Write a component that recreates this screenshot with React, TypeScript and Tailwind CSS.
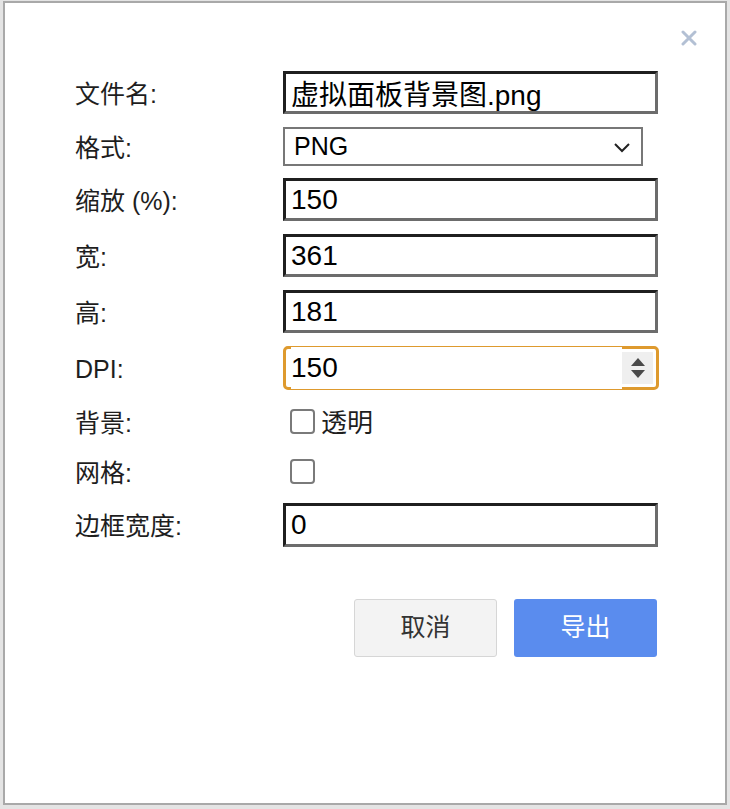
import React from 'react';

const font = { fontFamily: '"Liberation Sans", "Noto Sans CJK SC", sans-serif' };

const fieldCls =
  'w-[375px] h-[43px] border-[3px] border-t-[#1f1f1f] border-l-[#1f1f1f] border-b-[#6c6c6c] border-r-[#6c6c6c] bg-white px-[5px] text-[28px] text-black outline-none';

const Row = ({ label, className, children }: { label: string; className: string; children: React.ReactNode }) => (
  <div className={`flex items-center ${className}`}>
    <div className="w-[208px] text-[25px] text-[#1e1e1e] pt-[4px]">{label}</div>
    {children}
  </div>
);

const Checkbox = () => (
  <span className="inline-block w-[25px] h-[25px] rounded-[4px] border-2 border-[#7a7a7a] bg-white" />
);

export default function App() {
  return (
    <div className="w-[730px] h-[809px] bg-[#e4e4e4] pt-[1px]" style={font}>
      <div className="ml-[3px] w-[724px] h-[804px] border-2 border-[#a9a9a9] bg-white">
        <div className="h-[68px] flex justify-end pt-[27px] pr-[28px]">
          <svg width="16" height="16" viewBox="0 0 16 16">
            <path d="M2 2 L14 14 M14 2 L2 14" stroke="#b3c0d4" strokeWidth="3" strokeLinecap="round" />
          </svg>
        </div>

        <div className="pl-[70px]">
          <Row label="文件名:" className="h-[43px]">
            <input readOnly value="虚拟面板背景图.png" className={fieldCls} style={font} />
          </Row>

          <Row label="格式:" className="h-[39px] mt-[13px]">
            <div className="w-[360px] h-[39px] border-2 border-[#777] flex items-center justify-between pl-[9px] pr-[10px] text-[25px] text-black">
              <span>PNG</span>
              <svg width="18" height="12" viewBox="0 0 18 12">
                <path d="M2 3 L9 10 L16 3" fill="none" stroke="#222" strokeWidth="2" />
              </svg>
            </div>
          </Row>

          <Row label="缩放 (%):" className="h-[43px] mt-[12px]">
            <input readOnly value="150" className={fieldCls} style={font} />
          </Row>

          <Row label="宽:" className="h-[43px] mt-[13px]">
            <input readOnly value="361" className={fieldCls} style={font} />
          </Row>

          <Row label="高:" className="h-[43px] mt-[13px]">
            <input readOnly value="181" className={fieldCls} style={font} />
          </Row>

          <Row label="DPI:" className="h-[44px] mt-[13px]">
            <div className="w-[376px] h-[44px] border-[3px] border-[#de9a2e] rounded-[5px] flex items-center pl-[5px] pr-[3px]">
              <input readOnly value="150" className="flex-1 min-w-0 text-[28px] text-black outline-none bg-white" style={font} />
              <div className="w-[31px] h-[32px] bg-[#efefef] flex flex-col items-center justify-center gap-[4px]">
                <svg width="14" height="8" viewBox="0 0 14 8">
                  <path d="M7 0 L14 8 L0 8 Z" fill="#4a4a4a" />
                </svg>
                <svg width="14" height="8" viewBox="0 0 14 8">
                  <path d="M0 0 L14 0 L7 8 Z" fill="#4a4a4a" />
                </svg>
              </div>
            </div>
          </Row>

          <Row label="背景:" className="h-[25px] mt-[19px]">
            <div className="flex items-center pl-[7px]">
              <Checkbox />
              <span className="ml-[6px] text-[26px] text-[#1e1e1e] pt-[4px]">透明</span>
            </div>
          </Row>

          <Row label="网格:" className="h-[25px] mt-[25px]">
            <div className="flex items-center pl-[7px]">
              <Checkbox />
            </div>
          </Row>

          <Row label="边框宽度:" className="h-[44px] mt-[19px]">
            <input readOnly value="0" className={`${fieldCls} h-[44px]`} style={font} />
          </Row>
        </div>

        <div className="flex justify-end gap-[17px] pr-[68px] mt-[52px]">
          <button className="w-[143px] h-[58px] rounded-[3px] border-[1.5px] border-[#d6d6d6] bg-[#f3f3f3] text-[25px] text-[#333]">
            取消
          </button>
          <button className="w-[143px] h-[58px] rounded-[3px] bg-[#5a8cee] text-[25px] text-white">
            导出
          </button>
        </div>
      </div>
    </div>
  );
}
